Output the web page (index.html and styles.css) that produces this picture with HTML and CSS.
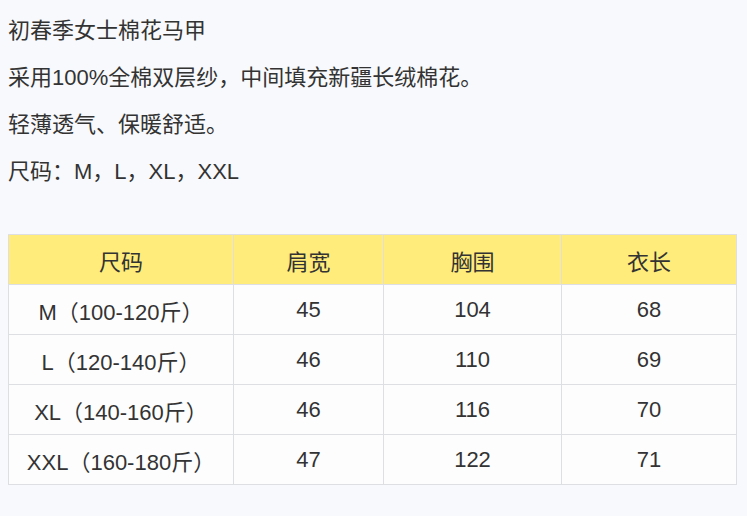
FILE: index.html
```html
<!DOCTYPE html>
<html lang="zh-CN">
<head>
<meta charset="utf-8">
<link rel="stylesheet" href="styles.css">
</head>
<body>
<div class="page">
  <div class="desc">
    <p>初春季女士棉花马甲</p>
    <p>采用100%全棉双层纱，中间填充新疆长绒棉花。</p>
    <p>轻薄透气、保暖舒适。</p>
    <p>尺码：M，L，XL，XXL</p>
  </div>
  <table class="sizes">
    <colgroup>
      <col class="c1"><col class="c2"><col class="c3"><col class="c4">
    </colgroup>
    <thead>
      <tr><th>尺码</th><th>肩宽</th><th>胸围</th><th>衣长</th></tr>
    </thead>
    <tbody>
      <tr><td>M（100-120斤）</td><td>45</td><td>104</td><td>68</td></tr>
      <tr><td>L（120-140斤）</td><td>46</td><td>110</td><td>69</td></tr>
      <tr><td>XL（140-160斤）</td><td>46</td><td>116</td><td>70</td></tr>
      <tr><td>XXL（160-180斤）</td><td>47</td><td>122</td><td>71</td></tr>
    </tbody>
  </table>
</div>
</body>
</html>
```
FILE: styles.css
```css
html, body {
  margin: 0;
  padding: 0;
  background: #f8f9fc;
}
body {
  font-family: "Liberation Sans", "Noto Sans CJK SC", sans-serif;
  font-size: 22px;
  color: #333333;
}
.page {
  padding: 7px 8px 0 8px;
}
.desc p {
  margin: 0;
  line-height: 47px;
}
.sizes {
  margin-top: 39px;
  border-collapse: collapse;
  table-layout: fixed;
  width: 728px;
  background: #fdfdfe;
}
.c1 { width: 225px; }
.c2 { width: 150px; }
.c3 { width: 178px; }
.c4 { width: 175px; }
.sizes th, .sizes td {
  border: 1px solid #dedfe3;
  height: 49px;
  padding: 0;
  text-align: center;
  font-weight: normal;
}
.sizes th {
  background: #ffec7b;
}
```
